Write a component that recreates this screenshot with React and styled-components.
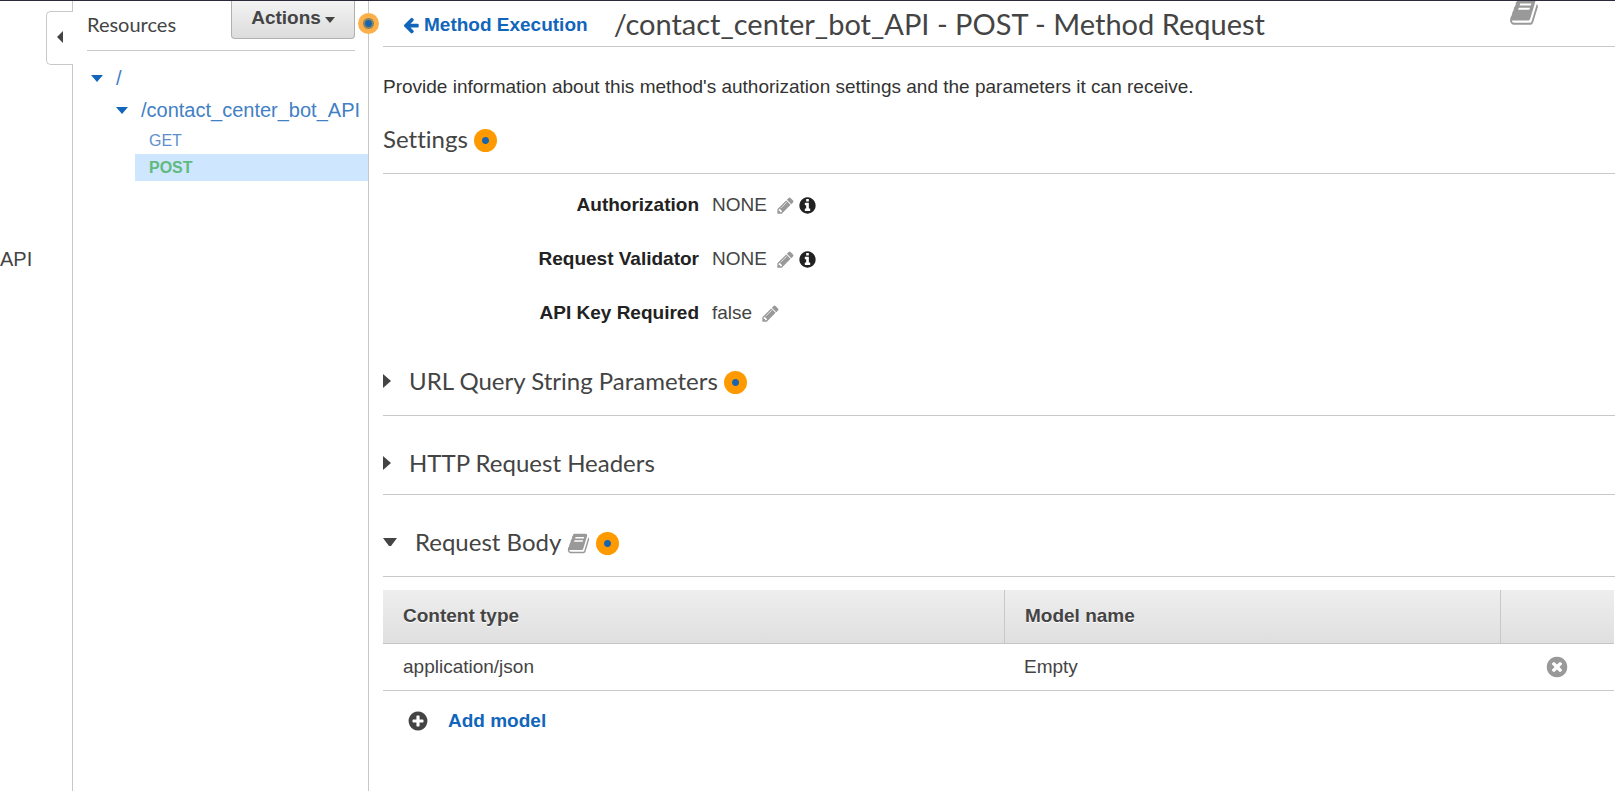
import React from "react";
import styled, { createGlobalStyle, css } from "styled-components";

const sans = '"Liberation Sans", Arial, sans-serif';
const lato = 'Lato, "Open Sans", sans-serif';
const rule = "#c8c8c8";
const ink = "#444444";
const blue = "#1166bb";

const GlobalStyle = createGlobalStyle`
  *, *::before, *::after { box-sizing: border-box; }
  body {
    margin: 0;
    background: #ffffff;
    color: ${ink};
    font: 19px/22px ${sans};
    font-variant-ligatures: none;
  }
`;

const CIRCLE =
  "M1664 896q0 209-103 385.500t-279.500 279.500-385.500 103-385.500-103-279.500-279.500-103-385.500 103-385.500 279.500-279.500 385.500-103 385.500 103 279.500 279.500 103 385.500z";

const ICONS = {
  arrowLeft:
    "M1664 896v128q0 53-32.500 90.500t-84.500 37.500h-704l293 294q38 36 38 90t-38 90l-75 76q-37 37-90 37-52 0-91-37l-651-652q-37-37-37-90 0-52 37-91l651-650q38-38 91-38 52 0 90 38l75 74q38 38 38 91t-38 91l-293 293h704q52 0 84.500 37.500t32.500 90.500z",
  book:
    "M1703 478q40 57 18 129l-275 906q-19 64-76.500 107.500t-122.500 43.500h-923q-77 0-148.500-53.500t-99.500-131.500q-24-67-2-127 0-4 3-27t4-37q1-8-3-21.500t-3-19.500q2-11 8-21t16.500-23.500 16.500-23.500q23-38 45-91.500t30-91.500q3-10 .5-30t-.5-28q3-11 17-28t17-23q21-36 42-92t25-90q1-9-2.500-32t.5-28q4-13 22-30.500t22-22.500q19-26 42.500-84.500t27.500-96.500q1-8-3-25.500t-2-26.500q2-8 9-18t18-23 17-21q8-12 16.500-30.500t15-35 16-36 19.500-32 26.500-23.500 36-11.500 47.500 5.500l-1 3q38-9 51-9h761q74 0 114 56t18 130l-274 906q-36 119-71.500 153.500t-128.500 34.500h-869q-27 0-38 15-11 16-1 43 24 70 144 70h923q29 0 56-15.500t35-41.500l300-987q7-22 5-57 38 15 59 43zm-1064 2q-4 13 2 22.500t20 9.500h608q13 0 25.500-9.500t16.500-22.500l21-64q4-13-2-22.500t-20-9.500h-608q-13 0-25.500 9.500t-16.500 22.500zm-83 256q-4 13 2 22.500t20 9.500h608q13 0 25.500-9.500t16.500-22.500l21-64q4-13-2-22.500t-20-9.500h-608q-13 0-25.500 9.500t-16.500 22.500z",
  pencil:
    "M491 1536l91-91-235-235-91 91v107h128v128h107zm523-928q0-22-22-22-10 0-17 7l-542 542q-7 7-7 17 0 22 22 22 10 0 17-7l542-542q7-7 7-17zm-54-192l416 416-832 832h-416v-416zm683 96q0 53-37 90l-166 166-416-416 166-165q36-38 90-38 53 0 91 38l235 234q37 39 37 91z",
  info:
    "M1152 1376v-160q0-14-9-23t-23-9h-96v-512q0-14-9-23t-23-9h-320q-14 0-23 9t-9 23v160q0 14 9 23t23 9h96v320h-96q-14 0-23 9t-9 23v160q0 14 9 23t23 9h448q14 0 23-9t9-23zm-128-896v-160q0-14-9-23t-23-9h-192q-14 0-23 9t-9 23v160q0 14 9 23t23 9h192q14 0 23-9t9-23z" + CIRCLE,
  remove:
    "M1277 1122q0-26-19-45l-181-181 181-181q19-19 19-45 0-27-19-46l-90-90q-19-19-46-19-26 0-45 19l-181 181-181-181q-19-19-45-19-27 0-46 19l-90 90q-19 19-19 46 0 26 19 45l181 181-181 181q-19 19-19 45 0 27 19 46l90 90q19 19 46 19 26 0 45-19l181-181 181 181q19 19 45 19 27 0 46-19l90-90q19-19 19-46z" + CIRCLE,
  plus:
    "M1344 960v-128q0-26-19-45t-45-19h-256v-256q0-26-19-45t-45-19h-128q-26 0-45 19t-19 45v256h-256q-26 0-45 19t-19 45v128q0 26 19 45t45 19h256v256q0 26 19 45t45 19h128q26 0 45-19t19-45v-256h256q26 0 45-19t19-45z" + CIRCLE,
};

const Glyph = styled.svg`
  display: block;
  flex: none;
  fill: currentColor;
  fill-rule: evenodd;
`;

const Icon = ({ name, size }) => (
  <Glyph width={size} height={size} viewBox="0 0 1792 1792" aria-hidden="true">
    <path d={ICONS[name]} />
  </Glyph>
);

const CARETS = {
  left: [6, 12, "6,0 6,12 0,6"],
  right: [8, 14, "0,0 8,7 0,14"],
  down: [14, 8, "0,0 14,0 8,8 6,8"],
  tree: [12, 7, "0,0 12,0 6,7"],
  menu: [10, 6, "0,0 10,0 5,6"],
};

const Caret = ({ kind }) => {
  const [w, h, points] = CARETS[kind];
  return (
    <Glyph width={w} height={h} viewBox={`0 0 ${w} ${h}`} aria-hidden="true">
      <polygon points={points} />
    </Glyph>
  );
};

const plainButton = css`
  display: flex;
  align-items: center;
  padding: 0;
  border: 0;
  background: none;
  color: inherit;
  font: inherit;
  cursor: pointer;
`;

const Page = styled.div`
  display: flex;
  min-height: 100vh;
  border-top: 1px solid #2b2a3a;
  overflow: hidden;
`;

const Rail = styled.nav`
  position: relative;
  flex: none;
  width: 73px;
  padding-top: 247px;
  border-right: 1px solid ${rule};
`;

const RailLink = styled.a`
  color: ${ink};
  font-size: 20px;
  text-decoration: none;
`;

const CollapseTab = styled.button`
  ${plainButton}
  position: absolute;
  top: 10px;
  right: -1px;
  width: 27px;
  height: 54px;
  padding: 0 0 2px 10px;
  border: 1px solid ${rule};
  border-right: 0;
  border-radius: 5px 0 0 5px;
  background: #ffffff;
`;

const Sidebar = styled.aside`
  position: relative;
  flex: none;
  width: 296px;
  border-right: 1px solid ${rule};
`;

const SidebarHeader = styled.header`
  display: flex;
  justify-content: space-between;
  align-items: flex-start;
  height: 50px;
  margin: 0 13px 0 14px;
  border-bottom: 1px solid ${rule};
`;

const SidebarTitle = styled.h2`
  margin: 12px 0 0;
  font: 400 20px/22px ${lato};
  font-variant-ligatures: none;
`;

const ActionsButton = styled.button`
  ${plainButton}
  justify-content: center;
  gap: 4px;
  width: 124px;
  height: 38px;
  padding-bottom: 4px;
  border: 1px solid #b0b0b0;
  border-top: 0;
  border-radius: 0 0 4px 4px;
  background: linear-gradient(#f3f3f3, #dcdcdc);
  font-weight: 700;

  ${Glyph} {
    margin-top: 4px;
  }
`;

const HintDot = styled.button`
  flex: none;
  width: 23px;
  height: 23px;
  padding: 0;
  border: 0;
  border-radius: 50%;
  background: radial-gradient(circle, #1a63ad 3px, #ff9900 4px);
  cursor: pointer;
`;

const EdgeDot = styled(HintDot)`
  position: absolute;
  top: 12px;
  right: -11px;
  z-index: 1;
  width: 21px;
  height: 21px;
  background: radial-gradient(circle, #1a63ad 3px, #8c8660 4px, #8c8660 5px, #fdb04a 6px);
`;

const Tree = styled.ul`
  margin: 0;
  padding: 0;
  list-style: none;
`;

const RootTree = styled(Tree)`
  padding-top: 11px;
`;

const MethodList = styled(Tree)`
  padding: 1px 0 0 62px;
`;

const TreeRow = styled.div`
  display: flex;
  align-items: center;
  gap: 13px;
  height: 32px;
  padding-left: ${(p) => p.$indent}px;
  color: ${blue};
  font-size: 20px;
`;

const TreeLink = styled.a`
  color: #4280c4;
  text-decoration: none;
`;

const MethodLink = styled.a`
  display: block;
  padding-left: 14px;
  background: ${(p) => (p.$selected ? "#cfe6ff" : "transparent")};
  color: ${(p) => (p.$selected ? "#5fbb7d" : "#5e8fcb")};
  font-size: 16px;
  font-weight: ${(p) => (p.$selected ? 700 : 400)};
  line-height: 27px;
  text-decoration: none;
`;

const Main = styled.main`
  flex: 1;
  min-width: 0;
  padding-left: 14px;
`;

const MainHeader = styled.header`
  display: flex;
  align-items: center;
  height: 46px;
  padding-left: 19px;
  border-bottom: 1px solid ${rule};
  overflow: hidden;
`;

const BackLink = styled.a`
  display: flex;
  align-items: center;
  gap: 4px;
  margin-right: 26px;
  padding-top: 3px;
  color: ${blue};
  font-weight: 700;
  text-decoration: none;
`;

const Title = styled.h1`
  margin: 0;
  font: 400 29px/44px ${lato};
  font-variant-ligatures: none;
`;

const DocsButton = styled.button`
  ${plainButton}
  color: #999999;
`;

const HeaderDocs = styled(DocsButton)`
  align-self: flex-start;
  margin: -4px 76px 0 auto;
`;

const Intro = styled.p`
  margin: 29px 0 0;
  color: #333333;
`;

const Section = styled.section`
  margin-top: ${(p) => p.$gap}px;
`;

const SectionHeading = styled.div`
  display: flex;
  align-items: center;
  gap: 6px;
  padding-bottom: ${(p) => (p.$tight ? 17 : 20)}px;
  border-bottom: 1px solid ${rule};

  & > button {
    margin-top: 3px;
  }
`;

const SectionTitle = styled.h2`
  margin: 0;
  font: 400 24px/29px ${lato};
  font-variant-ligatures: none;
`;

const Disclosure = styled.button`
  ${plainButton}
  gap: 18px;
  font-variant-ligatures: none;
`;

const Fields = styled.dl`
  display: grid;
  grid-template-columns: 316px 1fr;
  gap: 32px 13px;
  margin: 0;
  padding: 20px 0 10px;
`;

const FieldLabel = styled.dt`
  color: #222222;
  font-weight: 700;
  text-align: right;
`;

const FieldValue = styled.dd`
  display: flex;
  align-items: center;
  gap: 3px;
  margin: 0;
`;

const EditButton = styled.button`
  ${plainButton}
  margin-left: 6px;
  color: #999999;
`;

const InfoButton = styled.button`
  ${plainButton}
  color: #222222;
`;

const ModelTable = styled.table`
  width: calc(100% - 1px);
  margin-top: 13px;
  border-collapse: separate;
  border-spacing: 0;
  table-layout: fixed;
`;

const HeadRow = styled.tr`
  background: linear-gradient(#eeeeee, #dfdfdf);
`;

const HeadCell = styled.th`
  width: ${(p) => p.$width || "auto"};
  height: 54px;
  padding: 0 20px 1px;
  border-bottom: 1px solid #c4c4c4;
  text-align: left;
  text-shadow: 0 1px 0 #ffffff;

  & + & {
    border-left: 1px solid ${rule};
  }
`;

const Cell = styled.td`
  height: 47px;
  padding: 0 20px;
  border-bottom: 1px solid ${rule};
`;

const RemoveButton = styled.button`
  ${plainButton}
  margin: 0 auto;
  color: #999999;
`;

const AddModel = styled.button`
  ${plainButton}
  gap: 19px;
  margin: 19px 0 0 24px;
  color: ${ink};
`;

const AddLabel = styled.span`
  color: ${blue};
  font-weight: 700;
`;

const settings = [
  { label: "Authorization", value: "NONE", info: true },
  { label: "Request Validator", value: "NONE", info: true },
  { label: "API Key Required", value: "false" },
];

const Accordion = ({ title, open, docs, hint }) => (
  <Section $gap={32}>
    <SectionHeading $tight={!hint}>
      <SectionTitle>
        <Disclosure aria-expanded={!!open}>
          <Caret kind={open ? "down" : "right"} />
          {title}
        </Disclosure>
      </SectionTitle>
      {docs && (
        <DocsButton aria-label="Documentation">
          <Icon name="book" size={23} />
        </DocsButton>
      )}
      {hint && <HintDot aria-label={`Hint for ${title}`} />}
    </SectionHeading>
  </Section>
);

export default function App() {
  return (
    <>
      <GlobalStyle />
      <Page>
        <Rail>
          <CollapseTab aria-label="Collapse">
            <Caret kind="left" />
          </CollapseTab>
          <RailLink href="#api">API</RailLink>
        </Rail>

        <Sidebar>
          <SidebarHeader>
            <SidebarTitle>Resources</SidebarTitle>
            <ActionsButton>
              Actions
              <Caret kind="menu" />
            </ActionsButton>
          </SidebarHeader>
          <EdgeDot aria-label="Hint for Actions" />
          <RootTree>
            <li>
              <TreeRow $indent={18}>
                <Caret kind="tree" />
                <TreeLink href="#root">/</TreeLink>
              </TreeRow>
              <Tree>
                <li>
                  <TreeRow $indent={43}>
                    <Caret kind="tree" />
                    <TreeLink href="#resource">/contact_center_bot_API</TreeLink>
                  </TreeRow>
                  <MethodList>
                    <li><MethodLink href="#get">GET</MethodLink></li>
                    <li><MethodLink href="#post" $selected>POST</MethodLink></li>
                  </MethodList>
                </li>
              </Tree>
            </li>
          </RootTree>
        </Sidebar>

        <Main>
          <MainHeader>
            <BackLink href="#method-execution">
              <Icon name="arrowLeft" size={18} />
              Method Execution
            </BackLink>
            <Title>/contact_center_bot_API - POST - Method Request</Title>
            <HeaderDocs aria-label="Documentation">
              <Icon name="book" size={30} />
            </HeaderDocs>
          </MainHeader>

          <Intro>
            Provide information about this method's authorization settings and the parameters it can receive.
          </Intro>

          <Section $gap={26}>
            <SectionHeading>
              <SectionTitle>Settings</SectionTitle>
              <HintDot aria-label="Hint for Settings" />
            </SectionHeading>
            <Fields>
              {settings.map(({ label, value, info }) => (
                <React.Fragment key={label}>
                  <FieldLabel>{label}</FieldLabel>
                  <FieldValue>
                    {value}
                    <EditButton aria-label={`Edit ${label}`}>
                      <Icon name="pencil" size={19} />
                    </EditButton>
                    {info && (
                      <InfoButton aria-label={`About ${label}`}>
                        <Icon name="info" size={19} />
                      </InfoButton>
                    )}
                  </FieldValue>
                </React.Fragment>
              ))}
            </Fields>
          </Section>

          <Accordion title="URL Query String Parameters" hint />
          <Accordion title="HTTP Request Headers" />
          <Accordion title="Request Body" open docs hint />

          <ModelTable>
            <thead>
              <HeadRow>
                <HeadCell $width="621px">Content type</HeadCell>
                <HeadCell>Model name</HeadCell>
                <HeadCell $width="114px" aria-label="Remove" />
              </HeadRow>
            </thead>
            <tbody>
              <tr>
                <Cell>application/json</Cell>
                <Cell>Empty</Cell>
                <Cell>
                  <RemoveButton aria-label="Remove application/json">
                    <Icon name="remove" size={24} />
                  </RemoveButton>
                </Cell>
              </tr>
            </tbody>
          </ModelTable>
          <AddModel>
            <Icon name="plus" size={22} />
            <AddLabel>Add model</AddLabel>
          </AddModel>
        </Main>
      </Page>
    </>
  );
}
